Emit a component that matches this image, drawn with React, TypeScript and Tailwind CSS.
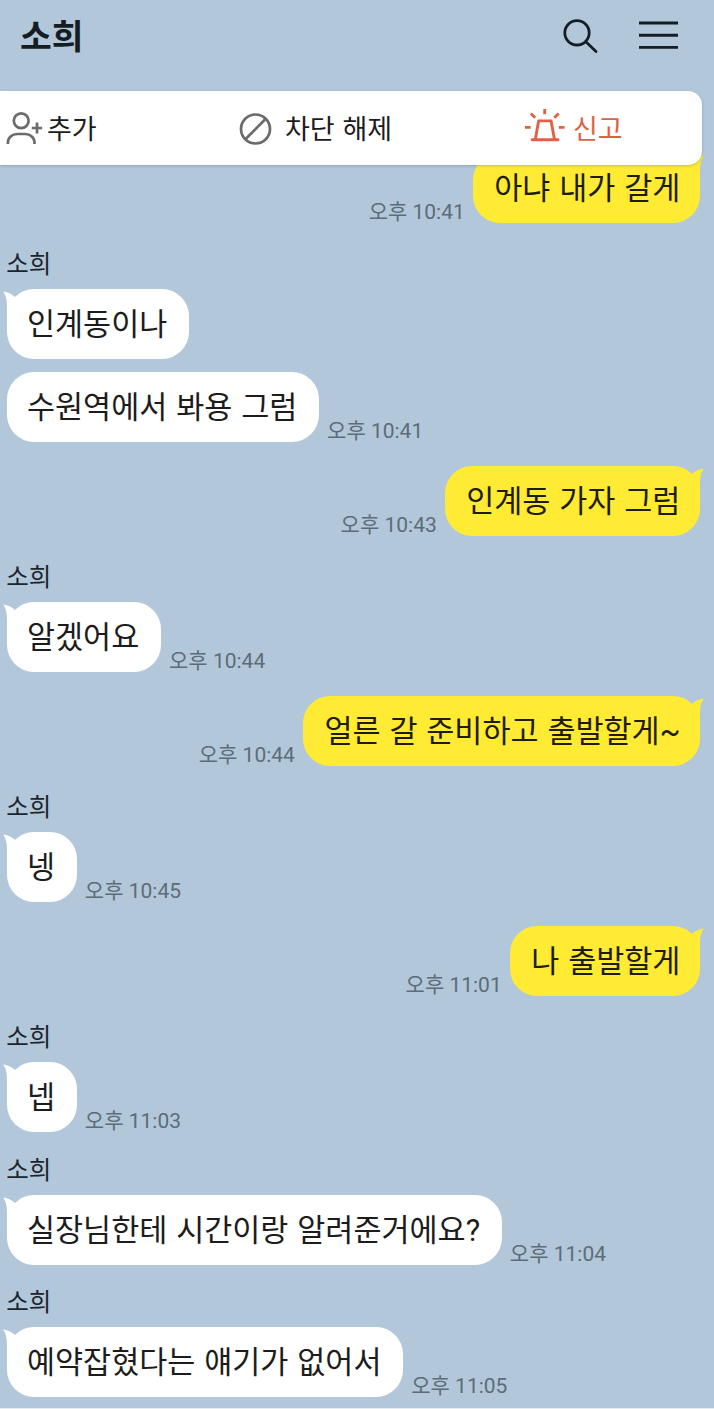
import { clsx } from 'clsx';

interface Message {
  mine?: boolean;
  name?: string;
  text: string;
  time?: string;
  gap: string;
}

const MESSAGES: Message[] = [
  { mine: true, text: '아냐 내가 갈게', time: '오후 10:41', gap: '' },
  { name: '소희', text: '인계동이나', gap: 'mt-[24px]' },
  { text: '수원역에서 봐용 그럼', time: '오후 10:41', gap: 'mt-[13px]' },
  { mine: true, text: '인계동 가자 그럼', time: '오후 10:43', gap: 'mt-[24px]' },
  { name: '소희', text: '알겠어요', time: '오후 10:44', gap: 'mt-[24px]' },
  { mine: true, text: '얼른 갈 준비하고 출발할게~', time: '오후 10:44', gap: 'mt-[24px]' },
  { name: '소희', text: '넹', time: '오후 10:45', gap: 'mt-[24px]' },
  { mine: true, text: '나 출발할게', time: '오후 11:01', gap: 'mt-[24px]' },
  { name: '소희', text: '넵', time: '오후 11:03', gap: 'mt-[24px]' },
  { name: '소희', text: '실장님한테 시간이랑 알려준거에요?', time: '오후 11:04', gap: 'mt-[20.5px]' },
  { name: '소희', text: '예약잡혔다는 얘기가 없어서', time: '오후 11:05', gap: 'mt-[20.5px]' },
];

function Tail({ mine }: { mine?: boolean }) {
  return (
    <svg
      viewBox="0 0 16 32"
      className={clsx(
        'absolute top-[1px] h-[32px] w-[16px]',
        mine ? 'right-[-4px] -scale-x-100 text-[#ffeb33]' : 'left-[-4px] text-white'
      )}
      fill="currentColor"
    >
      <path d="M.9 1.4C4.5 1.9 8.5 3.8 12.6 7.4L15 9V31H4V18C4 11 3.4 6.4.5 2.1Q.2 1.3.9 1.4Z" />
    </svg>
  );
}

function Bubble({ message }: { message: Message }) {
  const { mine, name, text, time, gap } = message;
  return (
    <div className={gap}>
      {name && <div className="-ml-[0.7px] h-[42px] text-[24.5px] leading-[35px] text-[#1c252d]">{name}</div>}
      <div className={clsx('flex items-end gap-2', mine && 'flex-row-reverse')}>
        <div
          className={clsx(
            'relative h-[70px] rounded-[27px] text-[30.5px] leading-[71px] whitespace-nowrap [word-spacing:1.3px]',
            mine ? 'bg-[#ffeb33] pr-[20px] pl-[21.5px] text-[#1f1c05]' : 'bg-white pr-[21.8px] pl-[20px] text-[#1c1c1c]'
          )}
        >
          {(mine || name) && <Tail mine={mine} />}
          <span className="relative">{text}</span>
        </div>
        {time && <div className="h-[26px] text-[21px] leading-[30px] whitespace-nowrap text-[#5d6c78]">{time}</div>}
      </div>
    </div>
  );
}

function ActionBar() {
  return (
    <div className="relative z-10 flex h-[74px] w-[702px] items-center rounded-r-[14px] bg-white text-[27px] leading-[40px] text-[#1c1c1c] shadow-[0_1px_3px_rgba(40,60,80,0.25)]">
      <div className="flex w-[239px] items-center gap-[4px] pl-[6px]">
        <svg width="37" height="34" viewBox="0 0 37 34" fill="none" stroke="#6b6b6b" strokeWidth="2.7">
          <circle cx="15.2" cy="9.8" r="7.4" />
          <path d="M1.9 33v-1.2C1.9 26.5 6 23 11.2 23h8C24.4 23 28.5 26.5 28.5 31.8V33M25.8 17h10.4M31 11.6v11" />
        </svg>
        <span className="pt-[4px]">추가</span>
      </div>
      <div className="flex w-[286px] items-center gap-[13px]">
        <svg width="33" height="33" viewBox="0 0 33 33" fill="none" stroke="#6b6b6b" strokeWidth="2.7">
          <circle cx="16.5" cy="17" r="14.5" />
          <path d="M6.4 27.2 26.7 6.8" />
        </svg>
        <span className="pt-[4px] [word-spacing:1px]">차단 해제</span>
      </div>
      <div className="flex items-center gap-[8px] text-[#dc6344]">
        <svg width="40" height="38" viewBox="0 3.3 40 38" fill="none" stroke="currentColor" strokeWidth="2.9">
          <path d="M10.4 33.5 13.6 15.2H26.1L29.4 33.5" strokeLinejoin="round" />
          <path d="M7.2 34H33" strokeLinecap="round" />
          <path d="M19.7 3.3V8.6M5.8 7.8 10.2 12M33.7 7.8 29.2 12M0 21.7h5.7M33.8 21.7h5.7" />
        </svg>
        <span className="pt-[4px]">신고</span>
      </div>
    </div>
  );
}

export default function App() {
  return (
    <div className="h-[1409px] w-[714px] overflow-hidden border-b border-[#e4ecf3] bg-[#b2c7da] font-[Roboto,'Noto_Sans_CJK_KR',sans-serif]">
      <header className="flex h-[91px] items-start justify-between pr-[36px] pl-[20px] text-[#151d24]">
        <h1 className="pt-[12px] text-[34.5px] leading-[50px] font-bold">소희</h1>
        <div className="flex items-center gap-[41px] pt-[18px]">
          <svg width="35" height="36" viewBox="0 0 35 36" fill="none" stroke="currentColor" strokeWidth="2.8">
            <circle cx="14" cy="14.8" r="12.2" />
            <path d="M22.6 23.6 33 33.5" strokeLinecap="round" />
          </svg>
          <svg width="39" height="36" viewBox="0 0 39 36" stroke="currentColor" strokeWidth="2.9">
            <path d="M0 5h39M0 17.2h39M0 29.4h39" />
          </svg>
        </div>
      </header>
      <ActionBar />
      <main className="-mt-[12px] pr-[13.6px] pl-[7px]">
        {MESSAGES.map((message, i) => (
          <Bubble key={i} message={message} />
        ))}
      </main>
    </div>
  );
}
